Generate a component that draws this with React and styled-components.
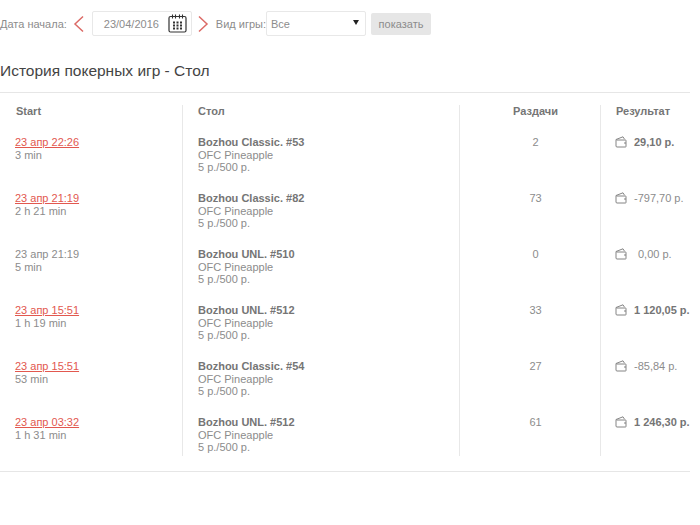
import React from 'react';
import styled, { createGlobalStyle } from 'styled-components';

const GlobalStyle = createGlobalStyle`
  html, body { margin: 0; padding: 0; background: #fff; }
  body { font-family: "Liberation Sans", Arial, sans-serif; color: #8a8a8a; overflow: hidden; }
`;

const games = [
  { start: '23 апр 22:26', link: true, time: '3 min', name: 'Bozhou Classic. #53', hands: '2', result: '29,10 р.', win: true },
  { start: '23 апр 21:19', link: true, time: '2 h 21 min', name: 'Bozhou Classic. #82', hands: '73', result: '-797,70 р.' },
  { start: '23 апр 21:19', link: false, time: '5 min', name: 'Bozhou UNL. #510', hands: '0', result: '0,00 р.', pad: true },
  { start: '23 апр 15:51', link: true, time: '1 h 19 min', name: 'Bozhou UNL. #512', hands: '33', result: '1 120,05 р.', win: true },
  { start: '23 апр 15:51', link: true, time: '53 min', name: 'Bozhou Classic. #54', hands: '27', result: '-85,84 р.' },
  { start: '23 апр 03:32', link: true, time: '1 h 31 min', name: 'Bozhou UNL. #512', hands: '61', result: '1 246,30 р.', win: true },
];

const Page = styled.div`
  width: 700px;
  height: 525px;
  overflow: hidden;
  padding-top: 11px;
  box-sizing: border-box;
  font-size: 11px;
`;

const Toolbar = styled.div`
  display: flex;
  align-items: center;
  height: 25px;
`;

const Label = styled.span`
  color: #8c8c8c;
  white-space: nowrap;
`;

const Arrow = styled.svg`
  width: 12px;
  height: 18px;
  margin: ${(p) => p.$margin};
  flex: none;
`;

const DateBox = styled.div`
  width: 100px;
  height: 25px;
  box-sizing: border-box;
  border: 1px solid #e8e8e8;
  border-radius: 2px;
  display: flex;
  align-items: center;
  justify-content: space-between;
  padding: 0 4px 0 11px;
  color: #8c8c8c;
`;

const SelectBox = styled.div`
  width: 100px;
  height: 25px;
  box-sizing: border-box;
  border: 1px solid #e8e8e8;
  border-radius: 2px;
  display: flex;
  align-items: center;
  justify-content: space-between;
  padding: 0 6px 0 4px;
  color: #8c8c8c;
`;

const Caret = styled.span`
  width: 0;
  height: 0;
  border-left: 3px solid transparent;
  border-right: 3px solid transparent;
  border-top: 5px solid #222;
  margin-bottom: 2px;
`;

const ShowButton = styled.button`
  width: 60px;
  height: 22px;
  margin-left: 5px;
  border: 0;
  border-radius: 2px;
  background: #e6e6e6;
  color: #8c8c8c;
  font: inherit;
  padding: 0;
`;

const Title = styled.h1`
  margin: 25px 0 0;
  font-size: 15.5px;
  line-height: 20px;
  font-weight: 400;
  color: #444;
`;

const Divider = styled.hr`
  width: 690px;
  height: 1px;
  margin: ${(p) => p.$margin};
  border: 0;
  background: #e6e6e6;
`;

const Table = styled.div`
  display: grid;
  grid-template-columns: 183px 277px 141px 99px;
  width: 700px;
  height: 351px;
`;

const Column = styled.div`
  box-sizing: border-box;
  height: 351px;
  padding-left: ${(p) => p.$pad || 15}px;
  border-right: ${(p) => (p.$last ? '0' : '1px solid #e8e8e8')};
  text-align: ${(p) => (p.$center ? 'center' : 'left')};
`;

const Head = styled.div`
  height: 31px;
  line-height: 13px;
  font-size: 11px;
  font-weight: 700;
  color: #757575;
  padding-left: ${(p) => p.$indent || 0}px;
`;

const Cell = styled.div`
  height: 56px;
  line-height: 12.5px;
  white-space: nowrap;
  color: #8c8c8c;
`;

const DateLink = styled.a`
  color: #e2584f;
  text-decoration: underline;
`;

const Strong = styled.div`
  font-weight: 700;
  color: #757575;
`;

const ResultCell = styled(Cell)`
  display: flex;
  align-items: flex-start;
`;

const Amount = styled.span`
  margin-left: ${(p) => (p.$pad ? 11 : 7)}px;
  font-weight: ${(p) => (p.$win ? 700 : 400)};
  color: ${(p) => (p.$win ? '#757575' : '#8c8c8c')};
`;

const WalletSvg = styled.svg`
  flex: none;
  margin: 0 0 0 -1px;
`;

const ArrowIcon = ({ right, margin }) => (
  <Arrow viewBox="0 0 12 18" $margin={margin}>
    <path
      d={right ? 'M2 1.5l8 7.5-8 7.5' : 'M10 1.5L2 9l8 7.5'}
      fill="none"
      stroke="#dc6a66"
      strokeWidth="1.5"
    />
  </Arrow>
);

const CalendarIcon = () => (
  <svg width="19" height="19" viewBox="0 0 19 19">
    <rect x="1" y="2.5" width="17" height="15.5" rx="1.5" fill="none" stroke="#333" strokeWidth="1.2" />
    <path d="M4.5 0.5v4M7.5 0.5v4M11.5 0.5v4M14.5 0.5v4" stroke="#333" strokeWidth="1.1" />
    <path
      d="M5 7.5h2v2H5zM8.5 7.5h2v2h-2zM12 7.5h2v2h-2zM5 10.5h2v2H5zM8.5 10.5h2v2h-2zM12 10.5h2v2h-2zM5 13.5h2v2H5zM8.5 13.5h2v2h-2zM12 13.5h2v2h-2z"
      fill="#333"
    />
  </svg>
);

const WalletIcon = () => (
  <WalletSvg width="12" height="12" viewBox="0 0 12 12">
    <path
      d="M1 3.5V10a1 1 0 0 0 1 1h8.5a.5.5 0 0 0 .5-.5v-6a.5.5 0 0 0-.5-.5H1.5M1 3.5L8 .8l1.5 2.4M9 7h2"
      fill="none"
      stroke="#777"
      strokeWidth="0.9"
    />
  </WalletSvg>
);

export default function App() {
  return (
    <Page>
      <GlobalStyle />
      <Toolbar>
        <Label>Дата начала:</Label>
        <ArrowIcon margin="0 7px 0 6px" />
        <DateBox>
          <span>23/04/2016</span>
          <CalendarIcon />
        </DateBox>
        <ArrowIcon right margin="0 7px 0 5px" />
        <Label>Вид игры:</Label>
        <SelectBox>
          <span>Все</span>
          <Caret />
        </SelectBox>
        <ShowButton>показать</ShowButton>
      </Toolbar>
      <Title>История покерных игр - Стол</Title>
      <Divider $margin="11px 0 12px" />
      <Table>
        <Column>
          <Head $indent={1}>Start</Head>
          {games.map((g, i) => (
            <Cell key={i}>
              {g.link ? <DateLink>{g.start}</DateLink> : g.start}
              <div>{g.time}</div>
            </Cell>
          ))}
        </Column>
        <Column>
          <Head>Стол</Head>
          {games.map((g, i) => (
            <Cell key={i}>
              <Strong>{g.name}</Strong>
              <div>OFC Pineapple</div>
              <div>5 р./500 р.</div>
            </Cell>
          ))}
        </Column>
        <Column $pad={11} $center>
          <Head>Раздачи</Head>
          {games.map((g, i) => (
            <Cell key={i}>{g.hands}</Cell>
          ))}
        </Column>
        <Column $last>
          <Head>Результат</Head>
          {games.map((g, i) => (
            <ResultCell key={i}>
              <WalletIcon />
              <Amount $win={g.win} $pad={g.pad}>{g.result}</Amount>
            </ResultCell>
          ))}
        </Column>
      </Table>
      <Divider $margin="15px 0 0" />
    </Page>
  );
}
